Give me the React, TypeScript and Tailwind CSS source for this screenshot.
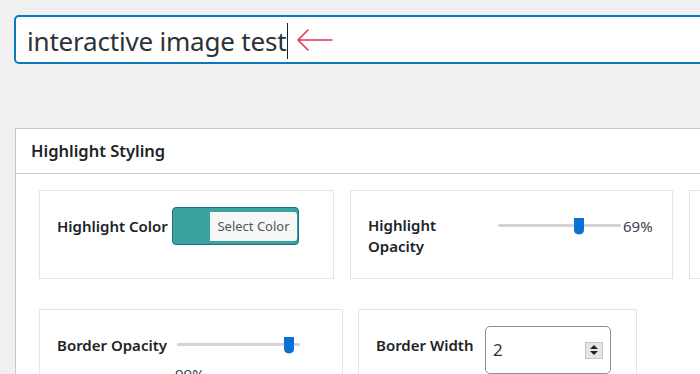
import React from "react";

const font = { fontFamily: '"Noto Sans", "Open Sans", sans-serif' };

function Slider({ width, pos }: { width: number; pos: number }) {
  return (
    <div className="relative h-[18px] shrink-0" style={{ width }}>
      <div className="absolute left-0 right-0 top-[7px] h-[3px] bg-[#d4d4d4] rounded-sm" />
      <svg
        className="absolute top-0"
        style={{ left: pos }}
        width="12"
        height="18"
        viewBox="0 0 12 18"
      >
        <path d="M1 1 H11 V13 Q11 17 6 17.5 Q1 17 1 13 Z" fill="#0a72d6" />
      </svg>
    </div>
  );
}

export default function App() {
  return (
    <div
      className="w-[700px] h-[374px] overflow-hidden bg-[#f0f0f1] text-[#1d2327]"
      style={font}
    >
      <div className="pt-[15px] pl-[14px]">
        <div className="w-[720px] h-[49px] border-2 border-[#0a7ac0] rounded-[5px] bg-white flex items-center pl-[11px]">
          <span className="text-[26px] text-[#2c3338] tracking-[-0.2px] leading-none mt-[3px]">
            interactive image test
          </span>
          <span className="w-px h-[36px] bg-[#1d2327] ml-px mt-[2px]" />
          <svg width="40" height="24" viewBox="0 0 40 24" className="ml-[9px] shrink-0 mt-[1px]">
            <path
              d="M1 12 H35 M11 2 L1 12 L11 22"
              stroke="#e0365c"
              strokeWidth="1.6"
              fill="none"
              strokeLinecap="round"
              strokeLinejoin="round"
            />
          </svg>
        </div>
      </div>

      <div className="ml-[15px] mt-[64px] w-[720px] border border-[#c8c9cc] bg-white">
        <div className="h-[45px] border-b border-[#c8c9cc] flex items-center pl-[15px]">
          <span className="text-[16.5px] font-semibold">Highlight Styling</span>
        </div>
        <div className="pl-[23px] pt-[16px] flex flex-col gap-[30px]">
          <div className="flex gap-[16px]">
            <div className="shrink-0 w-[295px] h-[89px] border border-[#e2e4e7] flex items-start pt-[16px] pl-[17px]">
              <div className="h-[38px] flex items-center w-[115px] text-[15px] font-semibold pt-[1px]">
                Highlight Color
              </div>
              <div className="w-[127px] h-[38px] rounded-[4px] border border-[#1f6f8b] bg-[#3ca29f] flex items-center justify-end pr-px">
                <div className="w-[87px] h-[29px] bg-[#f6f7f7] rounded-r-[3px] flex items-center justify-center text-[13px] text-[#50575e] pt-[2px]">
                  Select Color
                </div>
              </div>
            </div>
            <div className="shrink-0 w-[323px] h-[89px] border border-[#e2e4e7] flex items-start pt-[24px] pl-[17px]">
              <div className="w-[130px] text-[15px] font-semibold leading-[21px]">
                Highlight
                <br />
                Opacity
              </div>
              <div className="flex items-center h-[18px] mt-[2px]">
                <Slider width={123} pos={75} />
                <span className="ml-[2px] text-[15px] text-[#3c434a]">69%</span>
              </div>
            </div>
            <div className="shrink-0 w-[323px] h-[89px] border border-[#e2e4e7]" />
          </div>
          <div className="flex gap-[15px]">
            <div className="shrink-0 w-[304px] h-[89px] border border-[#e2e4e7] pl-[17px] pt-[24px]">
              <div className="flex items-center">
                <div className="w-[120px] text-[15px] font-semibold">Border Opacity</div>
                <Slider width={123} pos={106} />
              </div>
              <div className="pl-[118px] pt-[6px] text-[15px] text-[#3c434a]">99%</div>
            </div>
            <div className="shrink-0 w-[279px] h-[89px] border border-[#e2e4e7] pl-[17px] pt-[16px] flex items-start">
              <div className="w-[109px] h-[24px] mt-[7px] flex items-center text-[15px] font-semibold">
                Border Width
              </div>
              <div className="w-[126px] h-[48px] border border-[#8c8f94] rounded-[5px] flex items-center pl-[7px] pr-[7px]">
                <span className="text-[17px] text-[#2c3338] flex-1">2</span>
                <div className="w-[18px] h-[17px] bg-[#e5e5e5] border border-[#c4c4c4] flex flex-col items-center justify-center gap-[2px]">
                  <svg width="8" height="4" viewBox="0 0 8 4"><path d="M0 4 L4 0 L8 4 Z" fill="#222" /></svg>
                  <svg width="8" height="4" viewBox="0 0 8 4"><path d="M0 0 L4 4 L8 0 Z" fill="#222" /></svg>
                </div>
              </div>
            </div>
          </div>
        </div>
      </div>
    </div>
  );
}
